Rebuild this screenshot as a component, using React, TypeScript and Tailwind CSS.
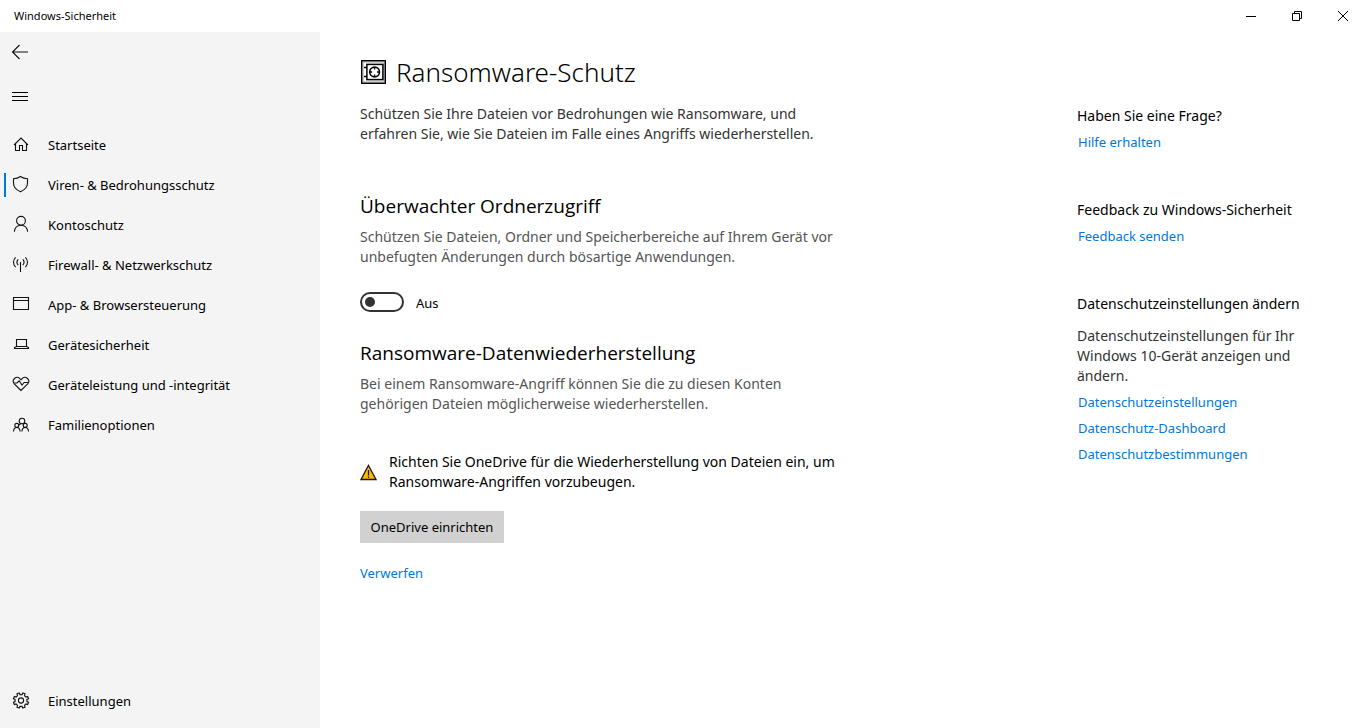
import { useState, type ReactNode } from "react";

const Icon = ({ children }: { children: ReactNode }) => (
  <svg
    aria-hidden="true"
    className="h-5 w-5 shrink-0"
    viewBox="0 0 20 20"
    fill="none"
    stroke="#111"
    strokeWidth="1.1"
  >
    {children}
  </svg>
);

const gearPath = (cx: number, cy: number, outer: number, inner: number, teeth: number) => {
  const step = (Math.PI * 2) / teeth;
  const point = (radius: number, angle: number) =>
    `${(cx + radius * Math.cos(angle)).toFixed(2)} ${(cy + radius * Math.sin(angle)).toFixed(2)}`;
  const parts: string[] = [];
  for (let i = 0; i < teeth; i++) {
    const a = i * step - Math.PI / 2 + step / 2;
    parts.push(
      point(inner, a - step * 0.28),
      point(outer, a - step * 0.2),
      point(outer, a + step * 0.2),
      point(inner, a + step * 0.28),
    );
  }
  return `M${parts.join("L")}Z`;
};

const navItems: { label: string; active?: boolean; icon: ReactNode }[] = [
  {
    label: "Startseite",
    icon: <path d="M3 10L10 3L17 10M4.5 8.8V15.5H8.5V10.5H11.5V15.5H15.5V8.8" />,
  },
  {
    label: "Viren- & Bedrohungsschutz",
    active: true,
    icon: (
      <path d="M9.5 1.5C7.5 3 5 3.7 2.5 3.7V8C2.5 12 5 14.8 9.5 16.8C14 14.8 16.5 12 16.5 8V3.7C14 3.7 11.5 3 9.5 1.5Z" />
    ),
  },
  {
    label: "Kontoschutz",
    icon: (
      <>
        <circle cx="10" cy="5.8" r="4.4" />
        <path d="M3.4 16.8C3.6 12.8 6.4 10.2 10 10.2S16.4 12.8 16.6 16.8" />
      </>
    ),
  },
  {
    label: "Firewall- & Netzwerkschutz",
    icon: (
      <path d="M9.5 7V17M7.2 4.4C5.7 6 5.7 8.4 7.2 10M11.8 4.4C13.3 6 13.3 8.4 11.8 10M4.6 2.4C1.8 5.2 1.8 9.2 4.6 12M14.4 2.4C17.2 5.2 17.2 9.2 14.4 12" />
    ),
  },
  {
    label: "App- & Browsersteuerung",
    icon: <path d="M2.5 2.5H17.5V14.5H2.5ZM2.5 5.5H17.5" />,
  },
  {
    label: "Gerätesicherheit",
    icon: <path d="M5.5 4.5H15.5V11.5H5.5ZM5.5 11.5L3.5 12.5V13.5H17.5V12.5L15.5 11.5" />,
  },
  {
    label: "Geräteleistung und -integrität",
    icon: (
      <>
        <path d="M10 15.5L3.3 8.8C1.9 7.2 2 4.9 3.5 3.5C5 2.1 7.2 2.1 8.6 3.4L10 4.8L11.4 3.4C12.8 2.1 15 2.1 16.5 3.5C18 4.9 18.1 7.2 16.7 8.8Z" />
        <path d="M3.2 8H6L8.2 5.8L11 10L13.2 7.5H17.2" />
      </>
    ),
  },
  {
    label: "Familienoptionen",
    icon: (
      <>
        <circle cx="11" cy="6" r="2.8" />
        <circle cx="5.8" cy="10.4" r="2" />
        <circle cx="14.2" cy="10.4" r="2" />
        <path d="M2.5 16.6C2.6 14 4 12.5 5.8 12.5S9 14 9.1 16.6M10.9 16.6C11 14 12.4 12.5 14.2 12.5S17.4 14 17.5 16.6M7.4 10.5C8 9.6 9 8.9 10 8.7" />
      </>
    ),
  },
];

const SafeIcon = () => (
  <svg
    aria-hidden="true"
    className="h-6 w-[25px] shrink-0"
    viewBox="0 0 25 24"
    fill="none"
    stroke="#000"
  >
    <rect x="2" y="2" width="21" height="20" stroke="#ccc" strokeWidth="2" />
    <rect x="0.7" y="0.7" width="23.6" height="22.6" strokeWidth="1.4" />
    <rect x="5.9" y="4.4" width="16" height="15.2" strokeWidth="1.5" />
    <path d="M3 7.5H6M3 16.5H6" strokeWidth="1.5" />
    <circle cx="13.6" cy="12" r="4.9" strokeWidth="1.6" />
    <path d="M13.6 7V9.6M13.6 14.4V17M8.6 12H11.2M16 12H18.6" strokeWidth="1.3" />
  </svg>
);

const WarningIcon = () => (
  <svg aria-hidden="true" className="h-[17px] w-[17px] shrink-0" viewBox="0 0 17 17">
    <path d="M8.5 1.5L16 15.5H1Z" fill="#ffb900" stroke="#1a1a1a" strokeWidth="1.3" />
    <path d="M8.5 6V11.5M8.5 12.5V14" stroke="#1a1a1a" strokeWidth="1.2" />
  </svg>
);

const Link = ({ children }: { children: ReactNode }) => (
  <a href="#" className="block w-fit pl-px text-[13px] leading-5 text-[#0078d7] hover:text-gray-500">
    {children}
  </a>
);

const SectionTitle = ({ children }: { children: ReactNode }) => (
  <h2 className="font-['Open_Sans','Noto_Sans',sans-serif] text-[19px] leading-7">{children}</h2>
);

const TitleBar = () => (
  <header className="flex h-8 shrink-0 items-center justify-between bg-white">
    <span className="pl-3.5 text-[11px]">Windows-Sicherheit</span>
    <div className="flex h-full">
      <button aria-label="Minimieren" className="flex w-[46px] items-center justify-center">
        <svg className="h-3 w-3" viewBox="0 0 12 12" stroke="#000">
          <path d="M1 6.5H11" />
        </svg>
      </button>
      <button aria-label="Verkleinern" className="flex w-[46px] items-center justify-center">
        <svg className="h-3 w-3" viewBox="0 0 12 12" fill="none" stroke="#000">
          <path d="M1.5 3.5H8.5V10.5H1.5ZM3.5 3.5V1.5H10.5V8.5H8.5" />
        </svg>
      </button>
      <button aria-label="Schließen" className="flex w-[46px] items-center justify-center">
        <svg className="h-3 w-3" viewBox="0 0 12 12" stroke="#000">
          <path d="M1 1L11 11M11 1L1 11" />
        </svg>
      </button>
    </div>
  </header>
);

const Sidebar = () => (
  <nav className="flex w-80 shrink-0 flex-col bg-[#f4f4f4] pb-[7px] text-[13px]">
    <button aria-label="Zurück" className="flex h-10 w-12 items-center pl-2.5">
      <Icon>
        <path d="M2.5 10H18M9.5 3L2.5 10L9.5 17" />
      </Icon>
    </button>
    <button aria-label="Navigation öffnen" className="mt-1 flex h-10 w-12 items-center pl-2.5">
      <svg aria-hidden="true" className="h-5 w-5" viewBox="0 0 20 20" stroke="#000">
        <path d="M2 6.5H18M2 10.5H18M2 14.5H18" />
      </svg>
    </button>
    <ul className="mt-[9px]">
      {navItems.map((item) => (
        <li key={item.label}>
          <a
            href="#"
            aria-current={item.active ? "page" : undefined}
            className="relative flex h-10 items-center gap-[17px] pl-[11px] hover:bg-gray-200"
          >
            {item.active && <span className="absolute left-1 h-6 w-0.5 bg-[#0078d7]" />}
            <Icon>{item.icon}</Icon>
            <span className="pt-0.5">{item.label}</span>
          </a>
        </li>
      ))}
    </ul>
    <a href="#" className="mt-auto flex h-10 items-center gap-[17px] pl-[11px] hover:bg-gray-200">
      <Icon>
        <path d={gearPath(10, 9.5, 7.8, 6, 8)} />
        <circle cx="10" cy="9.5" r="2.6" />
      </Icon>
      <span className="pt-0.5">Einstellungen</span>
    </a>
  </nav>
);

const ControlledFolderToggle = () => {
  const [on, setOn] = useState(false);
  return (
    <label className="mt-6 flex w-fit items-center gap-3 text-[13px] leading-5">
      <input
        type="checkbox"
        role="switch"
        checked={on}
        onChange={() => setOn(!on)}
        className="peer sr-only"
      />
      <span className="flex h-5 w-11 items-center rounded-full border-2 border-[#333] px-[3px] peer-checked:justify-end">
        <span className="h-2.5 w-2.5 rounded-full bg-[#333]" />
      </span>
      <span className="pt-0.5">{on ? "Ein" : "Aus"}</span>
    </label>
  );
};

export default function App() {
  return (
    <div className="flex min-h-screen flex-col bg-white font-['Noto_Sans','Open_Sans',sans-serif] text-black">
      <TitleBar />
      <div className="flex flex-1">
        <Sidebar />
        <main className="flex flex-1 justify-between pl-10 text-sm leading-5">
          <div className="w-[490px] pt-[22px] pb-8">
            <h1 className="flex items-center gap-2.5 pl-px text-[26px] leading-9 font-light">
              <SafeIcon />
              Ransomware-Schutz
            </h1>
            <p className="mt-3.5 text-[#333]">
              Schützen Sie Ihre Dateien vor Bedrohungen wie Ransomware, und
              <br />
              erfahren Sie, wie Sie Dateien im Falle eines Angriffs wiederherstellen.
            </p>

            <section className="mt-12">
              <SectionTitle>Überwachter Ordnerzugriff</SectionTitle>
              <p className="mt-[7px] text-[#555]">
                Schützen Sie Dateien, Ordner und Speicherbereiche auf Ihrem Gerät vor
                <br />
                unbefugten Änderungen durch bösartige Anwendungen.
              </p>
              <ControlledFolderToggle />
            </section>

            <section className="mt-[26px]">
              <SectionTitle>Ransomware-Datenwiederherstellung</SectionTitle>
              <p className="mt-[7px] text-[#555]">
                Bei einem Ransomware-Angriff können Sie die zu diesen Konten
                <br />
                gehörigen Dateien möglicherweise wiederherstellen.
              </p>
              <div className="mt-[38px] flex items-center gap-3">
                <WarningIcon />
                <p>
                  Richten Sie OneDrive für die Wiederherstellung von Dateien ein, um
                  <br />
                  Ransomware-Angriffen vorzubeugen.
                </p>
              </div>
              <button className="mt-[19px] block h-8 w-36 bg-[#d1d1d1] text-[13px] hover:bg-[#bfbfbf]">
                OneDrive einrichten
              </button>
              <button className="mt-5 block text-[13px] leading-5 text-[#0078d7] hover:text-gray-500">
                Verwerfen
              </button>
            </section>
          </div>

          <aside className="flex w-[289px] shrink-0 flex-col gap-12 pt-[74px] pr-12">
            <section className="flex flex-col gap-1.5">
              <h3>Haben Sie eine Frage?</h3>
              <Link>Hilfe erhalten</Link>
            </section>
            <section className="flex flex-col gap-1.5">
              <h3>Feedback zu Windows-Sicherheit</h3>
              <Link>Feedback senden</Link>
            </section>
            <section className="flex flex-col gap-1.5">
              <h3>Datenschutzeinstellungen ändern</h3>
              <p className="mt-1.5 text-[#333]">
                Datenschutzeinstellungen für Ihr Windows 10-Gerät anzeigen und ändern.
              </p>
              <Link>Datenschutzeinstellungen</Link>
              <Link>Datenschutz-Dashboard</Link>
              <Link>Datenschutzbestimmungen</Link>
            </section>
          </aside>
        </main>
      </div>
    </div>
  );
}
